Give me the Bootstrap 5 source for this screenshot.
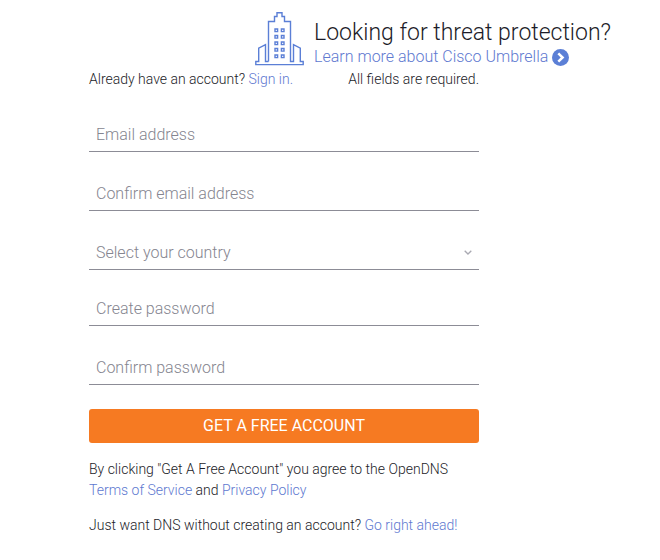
<!DOCTYPE html>
<html lang="en">
<head>
<meta charset="utf-8">
<meta name="viewport" content="width=device-width, initial-scale=1">
<title>OpenDNS – Create an account</title>
<link href="https://cdn.jsdelivr.net/npm/bootstrap@5.3.0/dist/css/bootstrap.min.css" rel="stylesheet">
<style>
body { font-family: Roboto, "Liberation Sans", sans-serif; font-weight: 300; font-size: 14px; line-height: 21px; color: #1c1c28; }
a { color: #6079d0; text-decoration: none; }
a:hover { text-decoration: underline; }
.promo { padding: 12px 49px 0 0; gap: 10px; }
.promo-title { font-size: 23px; line-height: 28px; font-weight: 300; margin: 7px 0 0; }
.promo-link { font-size: 16px; line-height: 20px; gap: 4px; }
.signup { max-width: 479px; padding: 2px 0 0 89px; }
.signup-field { height: 35px; border: 0; border-bottom: 1px solid #8c8c96; border-radius: 0; padding: 0 7px; font-size: 16px; font-weight: 300; line-height: 24px; color: #85858f; background-color: transparent; }
.signup-field::placeholder { color: #85858f; opacity: 1; }
.signup-fields { gap: 24px; padding-top: 27px; }
.country-group { margin-bottom: -3px; }
select.signup-field { appearance: none; padding: 2px 28px 0 7px; background-image: none; }
.country-arrow { right: 7px; top: 15px; pointer-events: none; }
.btn-signup { height: 34px; margin-top: 24px; padding: 0; border: 0; border-radius: 3px; background: #f67a22; color: #fff; font-size: 16px; line-height: 24px; font-weight: 400; }
.btn-signup:hover { background: #e46c17; color: #fff; }
.terms { margin: 16px 0 14px; }
</style>
<script src="https://cdn.jsdelivr.net/npm/bootstrap@5.3.0/dist/js/bootstrap.bundle.min.js" defer></script>
</head>
<body class="bg-white">
<header class="promo d-flex justify-content-end">
  <svg width="49" height="54" viewBox="0 0 49 54" fill="none" stroke="#5b7fd6" stroke-width="1.4" aria-hidden="true">
    <path d="M13.5 49.5V9.5H19.5V4.5H22V.8H27V4.5H29.5V9.5H35.5V49.5H38.5V32.7L45.3 36.2V49.5H48.2V52.6H.8V49.5H3.7V36.2L10.5 32.7V49.5H13.5"/>
    <path d="M20 17h2.6v2.6H20zM26.4 17H29v2.6h-2.6zM20 23.5h2.6v2.6H20zM26.4 23.5H29v2.6h-2.6zM20 30h2.6v2.6H20zM26.4 30H29v2.6h-2.6zM20 36.5h2.6v2.6H20zM26.4 36.5H29v2.6h-2.6zM20 43h2.6v2.6H20zM26.4 43H29v2.6h-2.6z"/>
  </svg>
  <div>
    <h1 class="promo-title">Looking for threat protection?</h1>
    <a href="#" class="promo-link d-flex align-items-center">Learn more about Cisco Umbrella
      <svg width="17" height="17" viewBox="0 0 17 17" aria-hidden="true"><circle cx="8.5" cy="8.5" r="8.5" fill="#5b7fd6"/><path d="M6.3 4.4L10.6 8.5L6.3 12.6" fill="none" stroke="#fff" stroke-width="2.5"/></svg>
    </a>
  </div>
</header>
<main class="signup">
  <div class="d-flex justify-content-between">
    <span>Already have an account? <a href="#">Sign in.</a></span>
    <span>All fields are required.</span>
  </div>
  <form>
    <div class="signup-fields d-flex flex-column">
      <input type="email" class="signup-field form-control shadow-none" placeholder="Email address" aria-label="Email address" required>
      <input type="email" class="signup-field form-control shadow-none" placeholder="Confirm email address" aria-label="Confirm email address" required>
      <div class="country-group position-relative">
        <select class="signup-field form-control shadow-none" aria-label="Select your country" required>
          <option value="">Select your country</option>
          <option>Canada</option>
          <option>United Kingdom</option>
          <option>United States</option>
        </select>
        <svg class="country-arrow position-absolute" width="8" height="5" viewBox="0 0 8 5" aria-hidden="true"><path d="M.7.7L4 4L7.3.7" fill="none" stroke="#a9a9b2" stroke-width="1.3"/></svg>
      </div>
      <input type="password" class="signup-field form-control shadow-none" placeholder="Create password" aria-label="Create password" required>
      <input type="password" class="signup-field form-control shadow-none" placeholder="Confirm password" aria-label="Confirm password" required>
    </div>
    <button type="submit" class="btn btn-signup w-100">GET A FREE ACCOUNT</button>
  </form>
  <p class="terms">By clicking "Get A Free Account" you agree to the OpenDNS <a href="#" class="text-nowrap">Terms of Service</a> and <a href="#">Privacy Policy</a></p>
  <p class="mb-0">Just want DNS without creating an account? <a href="#">Go right ahead!</a></p>
</main>
</body>
</html>
